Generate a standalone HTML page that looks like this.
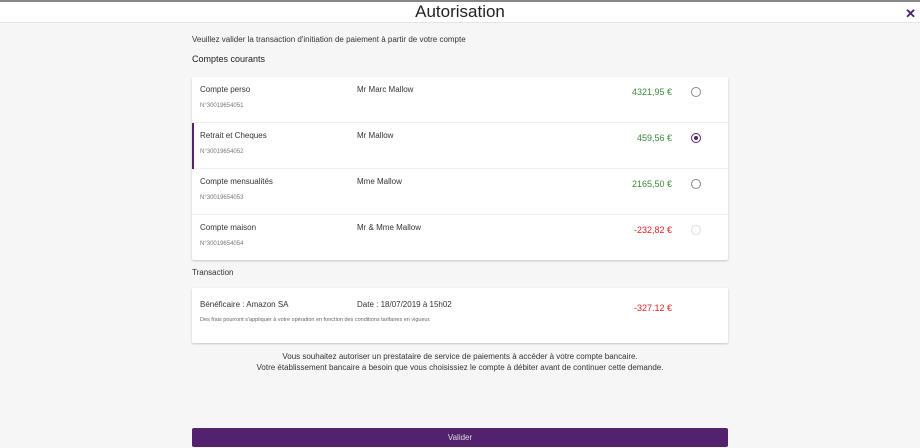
<!DOCTYPE html><html><head><style>
*{margin:0;padding:0;box-sizing:border-box}
body{width:920px;height:448px;background:#f6f6f6;font-family:"Liberation Sans",sans-serif;color:#333;position:relative;overflow:hidden}
.hdr{position:absolute;top:0;left:0;width:920px;height:23px;background:#fff;border-top:2px solid #888;border-bottom:1px solid #e4e4e4;text-align:center;font-size:17px;line-height:20px;color:#222}
.x{position:absolute;right:4px;top:2px;font-size:13px;color:#4a2070;font-weight:bold}
.t{position:absolute;font-size:8px}
.card{position:absolute;left:192px;width:536px;background:#fff;box-shadow:0 1px 2px rgba(0,0,0,.2);border-radius:2px}
.row{position:absolute;left:0;width:536px;height:46px;border-bottom:1px solid #eee}
.row .n{position:absolute;left:8px;top:8px;font-size:8px}
.row .num{position:absolute;left:8px;top:26px;font-size:6px;color:#777}
.row .o{position:absolute;left:165px;top:8px;font-size:8px}
.row .a{position:absolute;right:56px;top:10px;font-size:9px;color:#3a8a3a}
.rd{position:absolute;left:499px;top:10px;width:10px;height:10px;border:1px solid #888;border-radius:50%}
.bar{position:absolute;left:0;top:0;width:2px;height:46px;background:#52226e}
</style></head><body>
<div class="hdr">Autorisation<span class="x">✕</span></div>
<div class="t" style="left:192px;top:35px">Veuillez valider la transaction d'initiation de paiement à partir de votre compte</div>
<div class="t" style="left:192px;top:54px;font-size:9px;color:#222">Comptes courants</div>
<div class="card" style="top:77px;height:183px">
<div class="row" style="top:0"><div class="n">Compte perso</div><div class="num">N°30019654051</div><div class="o">Mr Marc Mallow</div><div class="a">4321,95 €</div><div class="rd"></div></div>
<div class="row" style="top:46px"><div class="bar"></div><div class="n">Retrait et Cheques</div><div class="num">N°30019654052</div><div class="o">Mr Mallow</div><div class="a">459,56 €</div><div class="rd" style="border-color:#52226e"><div style="width:4px;height:4px;background:#52226e;border-radius:50%;margin:2px"></div></div></div>
<div class="row" style="top:92px"><div class="n">Compte mensualités</div><div class="num">N°30019654053</div><div class="o">Mme Mallow</div><div class="a">2165,50 €</div><div class="rd"></div></div>
<div class="row" style="top:138px;border:none"><div class="n">Compte maison</div><div class="num">N°30019654054</div><div class="o">Mr &amp; Mme Mallow</div><div class="a" style="color:#e02020">-232,82 €</div><div class="rd" style="border-color:#ddd"></div></div>
</div>
<div class="t" style="left:192px;top:268px">Transaction</div>
<div class="card" style="top:288px;height:55px">
<div class="t" style="left:8px;top:12px">Bénéficaire : Amazon SA</div>
<div class="t" style="left:165px;top:12px">Date : 18/07/2019 à 15h02</div>
<div class="t" style="right:56px;top:15px;font-size:9px;color:#e02020">-327.12 €</div>
<div class="t" style="left:8px;top:29px;font-size:5.5px;color:#666">Des frais pourront s'appliquer à votre opération en fonction des conditions tarifaires en vigueur.</div>
</div>
<div class="t" style="left:192px;width:536px;top:351px;text-align:center;line-height:11px">Vous souhaitez autoriser un prestataire de service de paiements à accéder à votre compte bancaire.<br>Votre établissement bancaire a besoin que vous choisissiez le compte à débiter avant de continuer cette demande.</div>
<div style="position:absolute;left:192px;top:428px;width:536px;height:19px;background:#52226e;border-radius:2px;color:#ddd;font-size:8px;text-align:center;line-height:19px">Valider</div>
</body></html>
